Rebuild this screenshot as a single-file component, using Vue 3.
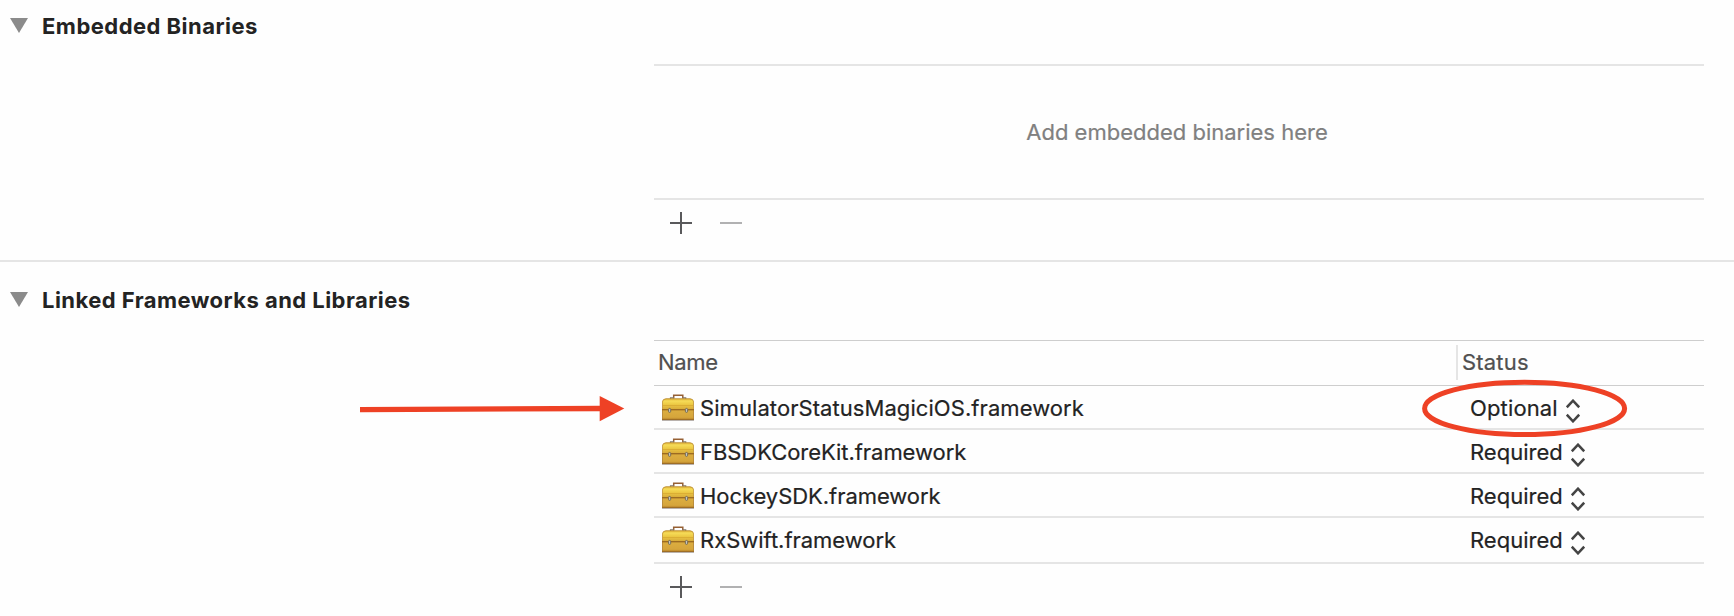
<script setup>
const frameworks = [
  { name: 'SimulatorStatusMagiciOS.framework', status: 'Optional', fit: 'loose' },
  { name: 'FBSDKCoreKit.framework', status: 'Required', fit: 'tight' },
  { name: 'HockeySDK.framework', status: 'Required', fit: 'tight' },
  { name: 'RxSwift.framework', status: 'Required', fit: 'snug' },
]
</script>

<template>
  <main class="page">
    <section class="section embedded">
      <header class="heading">
        <svg class="triangle" width="18" height="15" viewBox="0 0 18 15"><path d="M0 0H18L9 15Z" fill="#8b8b8b" /></svg>
        <h2 class="title-a">Embedded Binaries</h2>
      </header>
      <div class="panel">
        <div class="empty"><span>Add embedded binaries here</span></div>
        <div class="tools">
          <svg width="22" height="22" viewBox="0 0 22 22"><path d="M0 11H22M11 0V22" stroke="#59595b" stroke-width="2" /></svg>
          <svg width="22" height="22" viewBox="0 0 22 22"><path d="M0 11H22" stroke="#b1b1b2" stroke-width="2" /></svg>
        </div>
      </div>
    </section>

    <section class="section linked">
      <header class="heading">
        <svg class="triangle" width="18" height="15" viewBox="0 0 18 15"><path d="M0 0H18L9 15Z" fill="#8b8b8b" /></svg>
        <h2 class="title-b">Linked Frameworks and Libraries</h2>
      </header>
      <div class="panel">
        <div class="thead">
          <span class="col-name">Name</span>
          <span class="col-status">Status</span>
        </div>
        <div v-for="f in frameworks" :key="f.name" class="row">
          <svg class="toolbox" width="32" height="27" viewBox="0 0 32 27">
            <defs>
              <linearGradient id="lid" x1="0" y1="0" x2="0" y2="1">
                <stop offset="0" stop-color="#dcae34" />
                <stop offset=".2" stop-color="#f6dc58" />
                <stop offset=".5" stop-color="#ecc944" />
                <stop offset="1" stop-color="#d5a637" />
              </linearGradient>
              <linearGradient id="case" x1="0" y1="0" x2="0" y2="1">
                <stop offset="0" stop-color="#dcae40" />
                <stop offset=".7" stop-color="#d6a63c" />
                <stop offset="1" stop-color="#cc9834" />
              </linearGradient>
            </defs>
            <rect x="0" y="25.6" width="32" height="1.2" fill="#a9a09a" />
            <path d="M11.7 4.5V1.3H20.8V4.5" fill="none" stroke="#966034" stroke-width="1.5" />
            <path d="M8.5 5V3.8H12M20.5 3.8H23.7V5" fill="none" stroke="#7d766c" stroke-width="1.2" />
            <path d="M.4 16V8Q.5 5 4 4.7H28Q31.5 5 31.6 8V16Z" fill="url(#lid)" stroke="#b98a30" stroke-width=".8" />
            <rect x=".4" y="16" width="31.2" height="9.5" fill="url(#case)" stroke="#b07e2a" stroke-width=".8" />
            <path d="M1 11.5H31" stroke="#d4a12b" stroke-width=".6" />
            <path d="M0 15.6H32M0 25.3H32" stroke="#94631f" stroke-width=".9" />
            <g fill="#c7c5bd" stroke="#6c6656" stroke-width=".9">
              <rect x="6.5" y="14.4" width="2.2" height="4" rx="1.1" />
              <rect x="23.4" y="14.4" width="2.2" height="4" rx="1.1" />
            </g>
          </svg>
          <span class="framework" :class="f.fit">{{ f.name }}</span>
          <span class="status" :class="f.status.toLowerCase()">{{ f.status }}</span>
          <svg class="stepper" width="14" height="24" viewBox="0 0 14 24">
            <path d="M.8 8.3L7 1.7L13.2 8.3M.8 15.7L7 22.3L13.2 15.7" fill="none" stroke="#444" stroke-width="2.5" />
          </svg>
        </div>
        <div class="tools">
          <svg width="22" height="22" viewBox="0 0 22 22"><path d="M0 11H22M11 0V22" stroke="#59595b" stroke-width="2" /></svg>
          <svg width="22" height="22" viewBox="0 0 22 22"><path d="M0 11H22" stroke="#b1b1b2" stroke-width="2" /></svg>
        </div>
      </div>
    </section>

    <svg class="annotations" width="1734" height="616" viewBox="0 0 1734 616">
      <path d="M360 409.6L601 408.5" stroke="#ee4125" stroke-width="5.4" />
      <path d="M599.7 396L624.3 408.5L599.7 421.3Z" fill="#ee4125" />
      <ellipse cx="1524.6" cy="408.4" rx="100" ry="26.2" fill="none" stroke="#ee4125" stroke-width="5" />
    </svg>
  </main>
</template>

<style>
html,
body {
  background: #fefefe;
}
</style>

<style scoped>
.page {
  position: relative;
  width: 1734px;
  height: 616px;
  overflow: hidden;
  background: #fefefe;
  color: #232323;
  font: 22px/44px Inter, "Liberation Sans", sans-serif;
  white-space: nowrap;
  -webkit-text-stroke: 0.2px currentColor;
}
.section {
  box-sizing: border-box;
}
.embedded {
  height: 262px;
  padding-top: 4px;
  border-bottom: 2px solid #e5e5e5;
}
.linked {
  padding-top: 16px;
}
.heading {
  display: flex;
  height: 44px;
  padding-left: 10px;
}
.triangle {
  margin: 14px 14px 0 0;
}
h2 {
  margin: 0;
  font-size: 22px;
  font-weight: 700;
  -webkit-text-stroke: 0;
}
.title-a {
  letter-spacing: 0.47px;
}
.title-b {
  letter-spacing: 0.45px;
}
.panel {
  width: 1050px;
  margin-left: 654px;
}
.embedded .panel {
  margin-top: 16px;
}
.linked .panel {
  margin-top: 18px;
}
.empty {
  display: flex;
  align-items: center;
  justify-content: center;
  box-sizing: border-box;
  height: 136px;
  padding-right: 4px;
  border-top: 2px solid #e5e5e5;
  border-bottom: 2px solid #e5e5e5;
  color: #808080;
}
.tools {
  display: flex;
  gap: 28px;
  padding: 12px 0 0 16px;
}
.thead {
  display: grid;
  grid-template-columns: 802px 1fr;
  height: 44px;
  border-top: 1px solid #cecece;
  border-bottom: 1px solid #cecece;
  line-height: 42px;
  color: #505050;
}
.col-name {
  padding-left: 4px;
  letter-spacing: -0.3px;
}
.col-status {
  height: 35px;
  margin-top: 4px;
  padding-left: 4px;
  border-left: 2px solid #e5e5e5;
  line-height: 34px;
  letter-spacing: 0.2px;
}
.row {
  display: flex;
  height: 42px;
  padding-left: 8px;
  border-bottom: 2px solid #e5e5e5;
}
.row:nth-last-child(2) {
  height: 44px;
}
.toolbox {
  flex: none;
  margin-top: 8px;
}
.framework {
  width: 763px;
  margin-left: 6px;
}
.loose {
  letter-spacing: 0.07px;
}
.tight {
  letter-spacing: -0.05px;
}
.snug {
  letter-spacing: -0.02px;
}
.status {
  margin-left: 7px;
}
.optional {
  width: 96px;
  letter-spacing: 0.14px;
}
.required {
  width: 101px;
}
.stepper {
  margin-top: 13px;
}
.annotations {
  position: absolute;
  inset: 0;
}
</style>
